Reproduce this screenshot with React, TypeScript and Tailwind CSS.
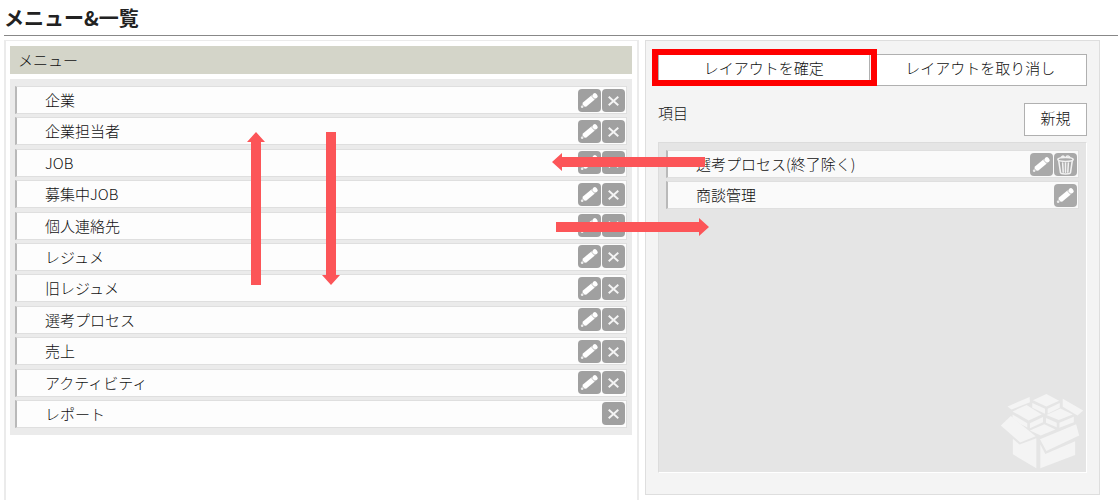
import React from 'react';

interface Item {
  label: string;
  actions: Action[];
}

type Action = 'edit' | 'remove' | 'trash';

const menuItems: Item[] = [
  { label: '企業', actions: ['edit', 'remove'] },
  { label: '企業担当者', actions: ['edit', 'remove'] },
  { label: 'JOB', actions: ['edit', 'remove'] },
  { label: '募集中JOB', actions: ['edit', 'remove'] },
  { label: '個人連絡先', actions: ['edit', 'remove'] },
  { label: 'レジュメ', actions: ['edit', 'remove'] },
  { label: '旧レジュメ', actions: ['edit', 'remove'] },
  { label: '選考プロセス', actions: ['edit', 'remove'] },
  { label: '売上', actions: ['edit', 'remove'] },
  { label: 'アクティビティ', actions: ['edit', 'remove'] },
  { label: 'レポート', actions: ['remove'] },
];

const spareItems: Item[] = [
  { label: '選考プロセス(終了除く)', actions: ['edit', 'trash'] },
  { label: '商談管理', actions: ['edit'] },
];

const actionLabels: Record<Action, string> = {
  edit: '編集',
  remove: '外す',
  trash: '削除',
};

const PencilIcon = () => (
  <svg viewBox="0 0 24 24" className="w-full h-full">
    <g transform="rotate(-40 12 12)">
      <path d="M5 9.2h11.5v5.6H5L3.8 13.4v-2.8z" fill="#fff" />
      <path d="M16.5 9.2h1v5.6h-1z" fill="#dcdcdc" />
      <rect x="17.3" y="9.2" width="4.6" height="5.6" rx="2" fill="#fff" />
      <circle cx="2" cy="12" r="1.4" fill="#ececec" />
    </g>
  </svg>
);

const CrossIcon = () => (
  <svg viewBox="0 0 24 24" className="w-full h-full" fill="none" stroke="#f4f4f4" strokeWidth="2">
    <path d="M7 8l10 9M17 8l-10 9" />
  </svg>
);

const TrashIcon = () => (
  <svg viewBox="0 0 24 24" className="w-full h-full" fill="none" stroke="#f2f2f2" strokeWidth="1.6" strokeLinecap="round">
    <ellipse cx="12" cy="6.8" rx="8" ry="2" />
    <path d="M7.5 4.5c1-1.5 2-1.5 3-.8M13 3.5c1.5-.8 3-.3 3.5 1.2" />
    <path d="M5 8.5l1.8 12c.2 1.8 10.2 1.8 10.4 0L19 8.5" />
    <path d="M9 10.5l.6 9.5M12 10.5V20M15 10.5l-.6 9.5" />
  </svg>
);

const icons: Record<Action, React.ReactNode> = {
  edit: <PencilIcon />,
  remove: <CrossIcon />,
  trash: <TrashIcon />,
};

const BoxIcon = () => (
  <svg viewBox="60 68 250 230" className="w-[84px] h-[77px]" fill="#f4f4f4">
    {/* Back flaps */}
    <path d="M82 108l66-28 1 16-55 21zM247 85l61 35-17 15-44-26z" />
    {/* Blocks */}
    <path d="M198 71l38 20-38 17-40-18zM156 98l38 17v15l-38-18zM202 115l36-17v14l-36 18z" />
    <path d="M97 123l42-19 45 28-39 18zM97 132l44 26v13l-22-11-22-18zM149 158l39-18v15l-39 18z" />
    <path d="M198 134l42-20 37 18-42 17zM197 143l32 14v13l-32-13zM237 157l43-18v16l-43 17z" />
    <path d="M149 180l43-19 33 16-44 18z" />
    {/* Front flaps */}
    <path d="M92 137l74 60-46 19-58-51zM179 206l108-45 9 34-98 46z" />
    {/* Carton */}
    <path d="M98 205l20 17 50-19v90l-70-42zM180 222l15 28 89-38v41l-104 40z" />
  </svg>
);

const ItemRow: React.FC<{ item: Item; muted?: boolean }> = ({ item, muted }) => (
  <li
    className={`flex items-center h-7 pl-7 pr-px border border-l-2 border-[#dfdfdf] border-l-[#b9b9b9] ${
      muted ? 'bg-[#fafafa]' : 'bg-[#fdfdfd]'
    }`}
  >
    <span className="flex-1">{item.label}</span>
    <div className="flex gap-px">
      {item.actions.map((action) => (
        <button
          key={action}
          type="button"
          aria-label={`${item.label} ${actionLabels[action]}`}
          className={`w-[23px] h-[23px] rounded-sm ${muted ? 'bg-[#a9a9a9]' : 'bg-[#a0a0a0]'}`}
        >
          {icons[action]}
        </button>
      ))}
    </div>
  </li>
);

const VerticalArrow: React.FC<{ className: string }> = ({ className }) => (
  <svg viewBox="0 0 18 153" className={`absolute w-[18px] h-[153px] ${className}`} fill="#fc5558">
    <path d="M9 0l9 10h-4v143H4V10H0z" />
  </svg>
);

const HorizontalArrow: React.FC<{ className: string }> = ({ className }) => (
  <svg viewBox="0 0 153 18" className={`absolute w-[153px] h-[18px] ${className}`} fill="#fc5558">
    <path d="M0 9l10-9v4h143v10H10v4z" />
  </svg>
);

const App: React.FC = () => {
  return (
    <div className="relative min-h-screen flex flex-col bg-white pl-1 text-[15px] leading-5 font-light text-[#111] font-['Noto_Sans_CJK_JP',sans-serif]">
      <h1 className="h-9 pt-1 border-b border-[#888] text-xl leading-7 font-bold text-[#222]">メニュー&amp;一覧</h1>

      <div className="flex-1 flex gap-1.5 pt-1 pr-[18px]">
        {/* Menu column */}
        <section className="flex-1 pl-1 pr-[5px] pt-1 border-x-2 border-t border-[#ebebeb]">
          <h2 className="mt-px h-7 px-2 leading-7 bg-[#d4d5c9]">メニュー</h2>
          <ul className="mt-[5px] min-h-[356px] px-[5px] py-[7px] flex flex-col justify-between bg-[#ebebeb]">
            {menuItems.map((item) => (
              <ItemRow key={item.label} item={item} />
            ))}
          </ul>
        </section>

        {/* Layout column */}
        <section className="w-[455px] self-start px-3 pt-[13px] pb-[21px] border border-[#dedede] bg-[#f4f4f4]">
          <div className="flex gap-1">
            <div className="relative flex-1">
              <button type="button" className="w-full h-8 pb-1 border border-[#b0b0b0] bg-white">
                レイアウトを確定
              </button>
              <div className="absolute -left-1.5 -right-[7px] -top-[5px] bottom-0 border-6 border-[#f00] pointer-events-none" />
            </div>
            <button type="button" className="flex-1 h-8 pb-1 border border-[#b0b0b0] bg-white">
              レイアウトを取り消し
            </button>
          </div>

          <div className="flex justify-between mt-[17px]">
            <h2>項目</h2>
            <button type="button" className="w-[63px] h-[33px] pb-1 border border-[#b0b0b0] bg-white">
              新規
            </button>
          </div>

          <div className="mt-1.5 min-h-[331px] flex flex-col justify-between border border-[#dcdcdc] border-r-white border-b-white bg-[#e5e5e5]">
            <ul className="flex flex-col gap-[3px] p-[7px]">
              {spareItems.map((item) => (
                <ItemRow key={item.label} item={item} muted />
              ))}
            </ul>
            <div className="self-end pr-0.5 pb-0.5">
              <BoxIcon />
            </div>
          </div>
        </section>
      </div>

      {/* Drag direction arrows */}
      <VerticalArrow className="left-[247px] top-[132px]" />
      <VerticalArrow className="left-[322px] top-[132px] rotate-180" />
      <HorizontalArrow className="left-[552px] top-[153px]" />
      <HorizontalArrow className="left-[556px] top-[218px] rotate-180" />
    </div>
  );
};

export default App;
